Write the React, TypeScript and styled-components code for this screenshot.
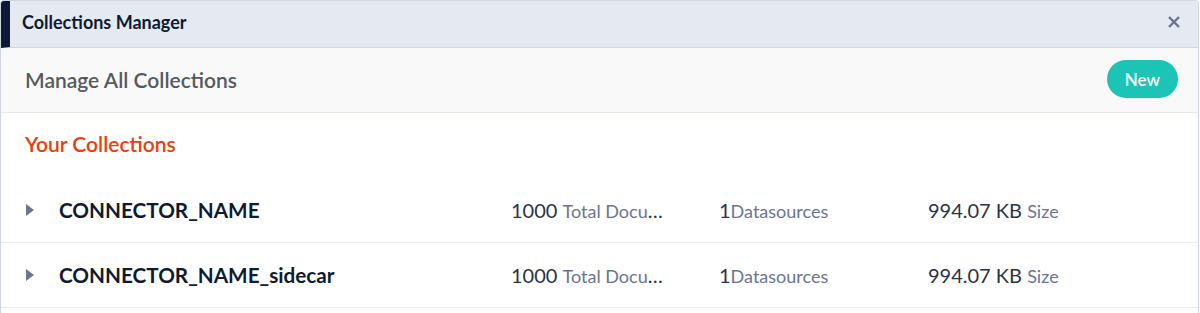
import React from 'react';
import styled, { createGlobalStyle } from 'styled-components';

// ─── Types ────────────────────────────────────────────────────────────────────

interface Collection {
  name: string;
  documents: number;
  datasources: number;
  size: string;
}

// ─── Global ───────────────────────────────────────────────────────────────────

const GlobalStyle = createGlobalStyle`
  html, body {
    margin: 0;
    padding: 0;
    background: #ffffff;
    font-family: Lato, "Open Sans", sans-serif;
  }
  * { box-sizing: border-box; }
`;

// ─── Styled ───────────────────────────────────────────────────────────────────

const Panel = styled.div`
  width: 1199px;
  height: 313px;
  border: 1px solid #cfd6e2;
  border-bottom: none;
  border-radius: 4px 4px 0 0;
  overflow: hidden;
  background: #ffffff;
`;

const TitleBar = styled.div`
  display: flex;
  align-items: center;
  justify-content: space-between;
  height: 47px;
  padding: 0 14px 4px 12px;
  background: #e4e9f2;
  border-left: 9px solid #0c1a33;
  border-bottom: 1px solid #cfd6e2;
`;

const Title = styled.h1`
  margin: 0;
  font-size: 18px;
  font-weight: 700;
  color: #0f1a33;
`;

const CloseButton = styled.button`
  display: flex;
  align-items: center;
  justify-content: center;
  width: 20px;
  height: 20px;
  padding: 0;
  border: none;
  background: transparent;
  cursor: pointer;
`;

const SubHeader = styled.div`
  display: flex;
  align-items: center;
  justify-content: space-between;
  height: 65px;
  padding: 0 20px 2px 24px;
  background: #f9f9f9;
  border-bottom: 1px solid #e6e9ee;
`;

const SubTitle = styled.h2`
  margin: 0;
  font-size: 21px;
  font-weight: 600;
  color: #555a60;
`;

const NewButton = styled.button`
  height: 38px;
  padding: 0 18px;
  border: none;
  border-radius: 19px;
  background: #1cc4b6;
  color: #ffffff;
  font-family: inherit;
  font-size: 17px;
  font-weight: 600;
  cursor: pointer;
`;

const Section = styled.div`
  padding: 18px 0 0;
`;

const SectionTitle = styled.h3`
  margin: 0 0 22px 24px;
  height: 25px;
  line-height: 25px;
  font-size: 21px;
  font-weight: 600;
  color: #e8400c;
`;

const Row = styled.div`
  display: grid;
  grid-template-columns: 35px 452px 208px 209px 1fr;
  align-items: center;
  height: 65px;
  padding: 0 0 1px 23px;
  border-bottom: 1px solid #eceef2;
`;

const Caret = styled.span`
  width: 0;
  height: 0;
  margin-left: 2px;
  border-top: 6px solid transparent;
  border-bottom: 6px solid transparent;
  border-left: 8px solid #6b7590;
`;

const Name = styled.span`
  font-size: 20.7px;
  font-weight: 700;
  color: #0f1a33;
`;

const Stat = styled.span<{ maxWidth?: number }>`
  max-width: ${({ maxWidth }) => (maxWidth ? `${maxWidth}px` : 'none')};
  white-space: nowrap;
  overflow: hidden;
  text-overflow: ellipsis;
  font-size: 20px;
  color: #2a3348;
`;

const StatLabel = styled.span`
  font-size: 18px;
  color: #6b7590;
`;

// ─── Data ─────────────────────────────────────────────────────────────────────

const COLLECTIONS: Collection[] = [
  { name: 'CONNECTOR_NAME', documents: 1000, datasources: 1, size: '994.07 KB' },
  { name: 'CONNECTOR_NAME_sidecar', documents: 1000, datasources: 1, size: '994.07 KB' },
];

// ─── Component ────────────────────────────────────────────────────────────────

const App: React.FC = () => (
  <>
    <GlobalStyle />
    <Panel>
      <TitleBar>
        <Title>Collections Manager</Title>
        <CloseButton aria-label="Close">
          <svg width="12" height="12" viewBox="0 0 12 12">
            <path d="M1 1L11 11M11 1L1 11" stroke="#6b7386" strokeWidth="2.4" strokeLinecap="butt" />
          </svg>
        </CloseButton>
      </TitleBar>
      <SubHeader>
        <SubTitle>Manage All Collections</SubTitle>
        <NewButton>New</NewButton>
      </SubHeader>
      <Section>
        <SectionTitle>Your Collections</SectionTitle>
        {COLLECTIONS.map((c) => (
          <Row key={c.name}>
            <Caret />
            <Name>{c.name}</Name>
            <Stat maxWidth={158} title={`${c.documents} Total Documents`}>
              {c.documents} <StatLabel>Total Documents</StatLabel>
            </Stat>
            <Stat>
              {c.datasources}
              <StatLabel>Datasources</StatLabel>
            </Stat>
            <Stat>
              {c.size} <StatLabel>Size</StatLabel>
            </Stat>
          </Row>
        ))}
      </Section>
    </Panel>
  </>
);

export default App;
